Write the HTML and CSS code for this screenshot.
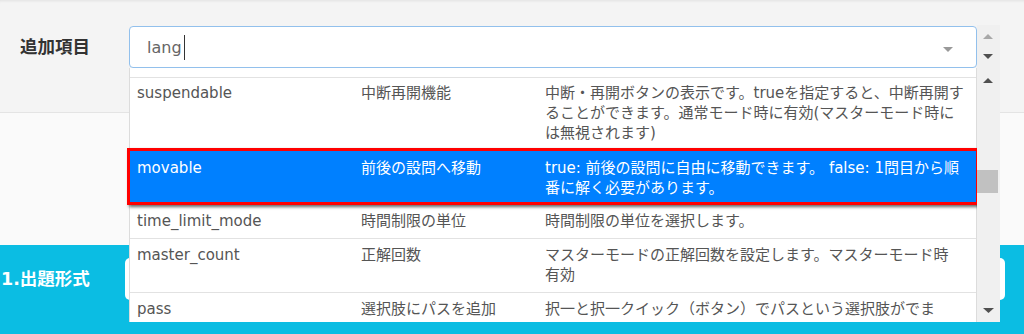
FILE: index.html
```html
<!DOCTYPE html>
<html lang="ja">
<head>
    <meta charset="UTF-8">
    <meta name="viewport" content="width=device-width, initial-scale=1.0">
    <title>追加項目</title>
    <link rel="stylesheet" href="styles.css">
</head>
<body>
    <!-- 追加項目 -->
    <div class="add-section">
        <div class="add-label">追加項目</div>
        <div class="select-wrap">
            <div class="select-box">
                <span class="select-text">lang</span><span class="caret"></span>
                <span class="select-arrow"></span>
            </div>

            <!-- ドロップダウン -->
            <div class="dropdown">
                <div class="option">
                    <div>suspendable</div>
                    <div>中断再開機能</div>
                    <div>中断・再開ボタンの表示です。trueを指定すると、中断再開することができます。通常モード時に有効(マスターモード時には無視されます)</div>
                </div>
                <div class="option is-active">
                    <div>movable</div>
                    <div>前後の設問へ移動</div>
                    <div>true: 前後の設問に自由に移動できます。 false: 1問目から順番に解く必要があります。</div>
                </div>
                <div class="option">
                    <div>time_limit_mode</div>
                    <div>時間制限の単位</div>
                    <div>時間制限の単位を選択します。</div>
                </div>
                <div class="option">
                    <div>master_count</div>
                    <div>正解回数</div>
                    <div>マスターモードの正解回数を設定します。マスターモード時<br>有効</div>
                </div>
                <div class="option">
                    <div>pass</div>
                    <div>選択肢にパスを追加</div>
                    <div>択一と択一クイック（ボタン）でパスという選択肢がでま<br>す。</div>
                </div>
            </div>

            <div class="scrollbar">
                <svg width="23" height="297" viewBox="0 0 23 297">
                    <polygon points="6,14 16,14 11,9" fill="#a8a8a8"/>
                    <polygon points="6,29 16,29 11,34" fill="#505050"/>
                    <polygon points="6,58 16,58 11,53" fill="#505050"/>
                    <rect x="0" y="145" width="21" height="23" fill="#c1c1c1"/>
                    <polygon points="6,283 17,283 11.5,288" fill="#505050"/>
                </svg>
            </div>
        </div>
    </div>

    <div class="blank-section"></div>

    <!-- 出題形式 -->
    <div class="form-section">
        <div class="form-label">1.出題形式</div>
        <div class="form-input"></div>
    </div>
</body>
</html>
```

FILE: styles.css
```css
body {
    font-family: 'DejaVu Sans', 'Noto Sans CJK JP', sans-serif;
    margin: 0;
    padding: 0;
    width: 1024px;
    height: 334px;
    overflow: hidden;
    background-color: #f4f4f4;
}

/* 追加項目 */
.add-section {
    box-sizing: border-box;
    height: 113px;
    padding-top: 26px;
    display: flex;
    align-items: flex-start;
    border-bottom: 1px solid #e4e4e4;
    box-shadow: inset 0 3px 3px -2px rgba(0,0,0,0.08);
}

.add-label {
    box-sizing: border-box;
    width: 129px;
    padding-left: 20px;
    line-height: 42px;
    font-size: 17.5px;
    font-weight: bold;
    color: #333;
}

.select-wrap {
    position: relative;
    width: 848px;
}

.select-box {
    box-sizing: border-box;
    height: 42px;
    padding-left: 17px;
    background-color: #fff;
    border: 1px solid #92c0ec;
    border-radius: 4px;
    display: flex;
    align-items: center;
}

.select-text {
    font-size: 16px;
    color: #666;
}

.caret {
    width: 1px;
    height: 25px;
    margin-left: 2px;
    background-color: #333;
}

.select-arrow {
    margin-left: auto;
    margin-right: 23px;
    margin-top: 4px;
    width: 0;
    height: 0;
    border-left: 5px solid transparent;
    border-right: 5px solid transparent;
    border-top: 5px solid #999;
}

/* ドロップダウン */
.dropdown {
    position: absolute;
    top: 100%;
    left: 0;
    box-sizing: border-box;
    width: 848px;
    height: 254px;
    padding-top: 9px;
    background-color: #fff;
    border-left: 1px solid #dcdcdc;
    border-right: 1px solid #dcdcdc;
    clip-path: inset(0 -8px 0 -8px);
    z-index: 10;
}

.option {
    display: grid;
    grid-template-columns: 216px 176px 1fr;
    column-gap: 8px;
    padding: 6px 7px 7px;
    border-top: 1px solid #e2e2e2;
    font-size: 15px;
    line-height: 20px;
    color: #555;
}

.option:first-child {
    padding-top: 5px;
    padding-bottom: 5px;
}

.option.is-active {
    margin: 0 -3px;
    padding: 7px 7px 4px;
    background-color: #0080ff;
    color: #fff;
    border: 3px solid #f00;
    box-shadow: 2px 2px 3px rgba(0,0,0,0.6);
    position: relative;
}

.option.is-active + .option {
    border-top: none;
}

.scrollbar {
    position: absolute;
    top: -1px;
    left: 100%;
    width: 23px;
    height: 297px;
    background-color: #f0f0f0;
    z-index: 10;
}

.scrollbar svg {
    display: block;
}

.blank-section {
    height: 132px;
    background-color: #fafafa;
}

/* 出題形式 */
.form-section {
    height: 89px;
    background-color: #0bbde3;
    display: flex;
    align-items: flex-start;
}

.form-label {
    box-sizing: border-box;
    width: 125px;
    padding-left: 1px;
    margin-top: 13px;
    line-height: 42px;
    font-size: 17.5px;
    font-weight: bold;
    color: #fff;
}

.form-input {
    margin-top: 13px;
    width: 880px;
    height: 42px;
    background-color: #fff;
    border-radius: 5px;
}
```
